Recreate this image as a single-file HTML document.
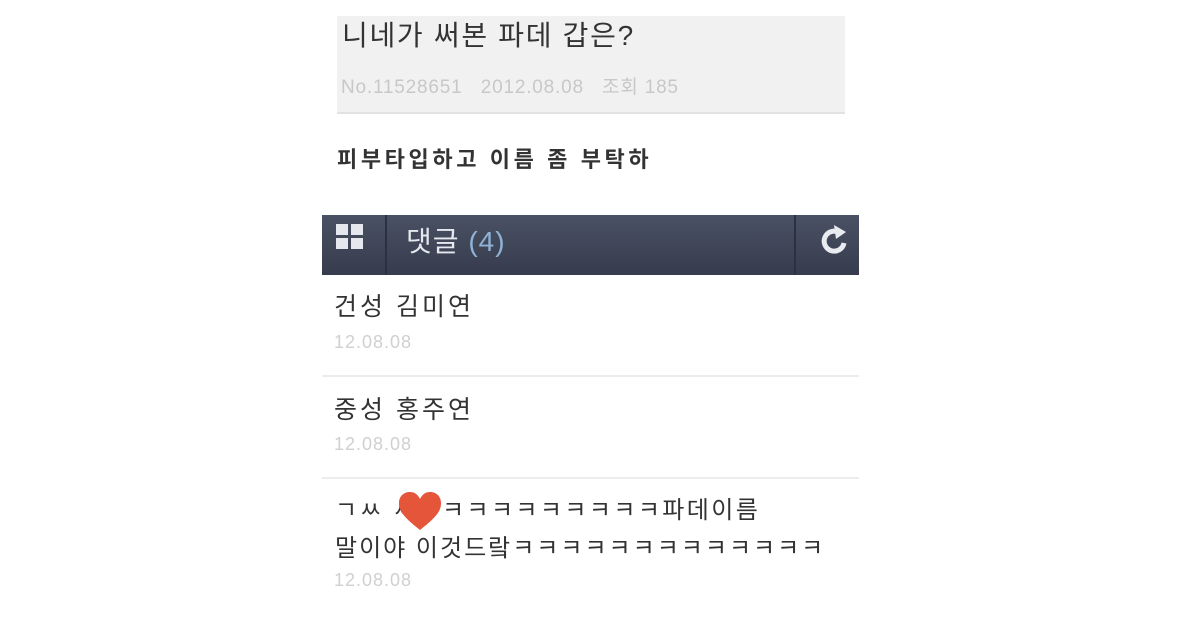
<!DOCTYPE html>
<html><head><meta charset="utf-8"><style>
body{margin:0;width:1200px;height:630px;background:#fff;position:relative;overflow:hidden;font-family:"Liberation Sans","Noto Sans CJK KR","NanumGothic",sans-serif;}
.a{position:absolute;white-space:nowrap;}
.d{font-size:18px;color:#d0d0d0;letter-spacing:1px;}
</style></head><body>
<div class="a" style="left:337px;top:16px;width:508px;height:96px;background:#f1f1f1;border-bottom:2px solid #e2e2e2;"></div>
<div class="a" style="left:342px;top:14px;font-size:28px;color:#333;letter-spacing:1.7px;">니네가 써본 파데 갑은?</div>
<div class="a" style="left:341px;top:72px;font-size:19px;color:#c8c8c8;letter-spacing:0.8px;">No.11528651 &nbsp;&nbsp;2012.08.08 &nbsp;&nbsp;조회 185</div>
<div class="a" style="left:337px;top:142px;font-size:22px;color:#333;font-weight:bold;letter-spacing:3.6px;">피부타입하고 이름 좀 부탁하</div>
<div class="a" style="left:322px;top:215px;width:537px;height:60px;background:linear-gradient(#4a5164,#363c4d);"></div>
<div class="a" style="left:385px;top:215px;width:2px;height:60px;background:#2c3140;"></div>
<div class="a" style="left:794px;top:215px;width:2px;height:60px;background:#2c3140;"></div>
<div class="a" style="left:336px;top:224px;width:12px;height:11px;background:#e5e8ee;box-shadow:15px 0 #e5e8ee,0 14px #e5e8ee,15px 14px #e5e8ee;"></div>
<div class="a" style="left:406px;top:220px;font-size:28px;color:#e5e8ee;letter-spacing:1px;">댓글 <span style="color:#8fb3d6;">(4)</span></div>
<svg class="a" style="left:818px;top:223px" width="32" height="36" viewBox="0 0 32 36"><path d="M22 10 A10 10 0 1 0 26 20" fill="none" stroke="#e8ebf0" stroke-width="5"/><path d="M16 2 L28 9 L18 16 Z" fill="#e8ebf0"/></svg>
<div class="a" style="left:334px;top:287px;font-size:25px;color:#333;letter-spacing:3px;">건성 김미연</div>
<div class="a d" style="left:334px;top:332px;">12.08.08</div>
<div class="a" style="left:322px;top:375px;width:537px;height:2px;background:#ececec;"></div>
<div class="a" style="left:334px;top:390px;font-size:25px;color:#333;letter-spacing:3px;">중성 홍주연</div>
<div class="a d" style="left:334px;top:434px;">12.08.08</div>
<div class="a" style="left:322px;top:477px;width:537px;height:2px;background:#ececec;"></div>
<div class="a" style="left:335px;top:490px;font-size:24px;color:#333;letter-spacing:2.4px;">ㄱㅆ ㅆㅋㅋㅋㅋㅋㅋㅋㅋㅋㅋ파데이름</div>
<div class="a" style="left:335px;top:528px;font-size:24px;color:#333;letter-spacing:2px;">말이야 이것드랔ㅋㅋㅋㅋㅋㅋㅋㅋㅋㅋㅋㅋㅋ</div>
<div class="a d" style="left:334px;top:570px;">12.08.08</div>
<svg class="a" style="left:397px;top:490px" width="46" height="42" viewBox="0 0 46 42"><path d="M23 40 C8 28 2 22 2 13 C2 6 7 2 13 2 C18 2 21 5 23 9 C25 5 28 2 33 2 C39 2 44 6 44 13 C44 22 38 28 23 40Z" fill="#e5553a"/></svg>
<div class="a" style="left:0;top:590px;width:1200px;height:40px;background:#fff;"></div>
</body></html>
